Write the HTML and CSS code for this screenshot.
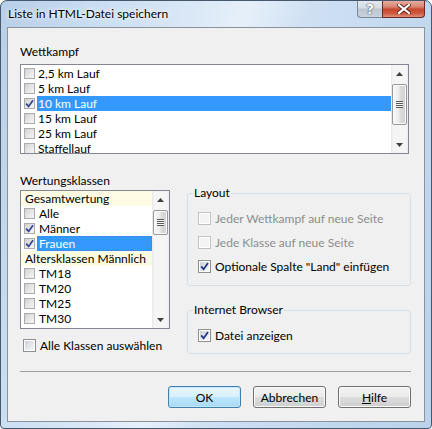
FILE: index.html
```html
<!DOCTYPE html>
<html>
<head>
<meta charset="utf-8">
<title>Liste in HTML-Datei speichern</title>
<link rel="stylesheet" href="styles.css">
</head>
<body>
<div class="window">
  <div class="titlebar">
    <span class="title">Liste in HTML-Datei speichern</span>
    <div class="caption-buttons">
      <span class="cap-btn help">?</span>
      <span class="cap-btn close"><svg width="14" height="10" viewBox="0 0 14 10"><path d="M2 1 L12 9 M12 1 L2 9" stroke="#5a2318" stroke-width="4" stroke-linecap="square"/><path d="M2 1 L12 9 M12 1 L2 9" stroke="#ffffff" stroke-width="2.2" stroke-linecap="square"/></svg></span>
    </div>
  </div>
  <div class="client">
    <div class="label">Wettkampf</div>
    <div class="listbox list-wk">
      <div class="items">
        <div class="item"><span class="lcb"></span><span class="txt">2,5 km Lauf</span></div>
        <div class="item"><span class="lcb"></span><span class="txt">5 km Lauf</span></div>
        <div class="item sel"><span class="lcb"><svg viewBox="0 0 9 9" width="9" height="9"><path d="M1.2 4.6 L3.6 7.4 L8 1.2" fill="none" stroke="#33448f" stroke-width="1.7"/></svg></span><span class="txt">10 km Lauf</span></div>
        <div class="item"><span class="lcb"></span><span class="txt">15 km Lauf</span></div>
        <div class="item"><span class="lcb"></span><span class="txt">25 km Lauf</span></div>
        <div class="item"><span class="lcb"></span><span class="txt">Staffellauf</span></div>
      </div>
      <div class="sb">
        <div class="sb-btn"><svg width="7" height="4" viewBox="0 0 7 4"><path d="M0 4 L3.5 0 L7 4 Z" fill="#404040"/></svg></div>
        <div class="thumb thumb-wk"><span class="grip"></span></div>
        <div class="sb-fill"></div>
        <div class="sb-btn"><svg width="7" height="4" viewBox="0 0 7 4"><path d="M0 0 L3.5 4 L7 0 Z" fill="#404040"/></svg></div>
      </div>
    </div>

    <div class="lower">
      <div class="left-col">
        <div class="label">Wertungsklassen</div>
        <div class="listbox list-kl">
          <div class="items">
            <div class="item head"><span class="htxt">Gesamtwertung</span></div>
            <div class="item"><span class="lcb"></span><span class="txt">Alle</span></div>
            <div class="item"><span class="lcb"><svg viewBox="0 0 9 9" width="9" height="9"><path d="M1.2 4.6 L3.6 7.4 L8 1.2" fill="none" stroke="#33448f" stroke-width="1.7"/></svg></span><span class="txt">Männer</span></div>
            <div class="item sel focus"><span class="lcb"><svg viewBox="0 0 9 9" width="9" height="9"><path d="M1.2 4.6 L3.6 7.4 L8 1.2" fill="none" stroke="#33448f" stroke-width="1.7"/></svg></span><span class="txt">Frauen</span></div>
            <div class="item head"><span class="htxt">Altersklassen Männlich</span></div>
            <div class="item"><span class="lcb"></span><span class="txt">TM18</span></div>
            <div class="item"><span class="lcb"></span><span class="txt">TM20</span></div>
            <div class="item"><span class="lcb"></span><span class="txt">TM25</span></div>
            <div class="item"><span class="lcb"></span><span class="txt">TM30</span></div>
          </div>
          <div class="sb">
            <div class="sb-btn"><svg width="7" height="4" viewBox="0 0 7 4"><path d="M0 4 L3.5 0 L7 4 Z" fill="#404040"/></svg></div>
            <div class="thumb thumb-kl"><span class="grip"></span></div>
            <div class="sb-fill"></div>
            <div class="sb-btn"><svg width="7" height="4" viewBox="0 0 7 4"><path d="M0 0 L3.5 4 L7 0 Z" fill="#404040"/></svg></div>
          </div>
        </div>
        <div class="check-row all-row"><span class="cb"><i></i></span><span>Alle Klassen auswählen</span></div>
      </div>

      <div class="right-col">
        <fieldset class="group layout-group">
          <legend>Layout</legend>
          <div class="check-row opt disabled"><span class="cb"><i></i></span><span>Jeder Wettkampf auf neue Seite</span></div>
          <div class="check-row opt disabled"><span class="cb"><i></i></span><span>Jede Klasse auf neue Seite</span></div>
          <div class="check-row opt"><span class="cb"><i><svg viewBox="0 0 9 9" width="9" height="9"><path d="M1.2 4.4 L3.6 7.3 L8 1" fill="none" stroke="#24388c" stroke-width="1.8"/></svg></i></span><span>Optionale Spalte "Land" einfügen</span></div>
        </fieldset>
        <fieldset class="group browser-group">
          <legend>Internet Browser</legend>
          <div class="check-row opt"><span class="cb"><i><svg viewBox="0 0 9 9" width="9" height="9"><path d="M1.2 4.4 L3.6 7.3 L8 1" fill="none" stroke="#24388c" stroke-width="1.8"/></svg></i></span><span>Datei anzeigen</span></div>
        </fieldset>
      </div>
    </div>

    <div class="separator"></div>

    <div class="buttons">
      <button class="btn default">OK</button>
      <button class="btn">Abbrechen</button>
      <button class="btn"><u>H</u>ilfe</button>
    </div>
  </div>
</div>
</body>
</html>
```

FILE: styles.css
```css
html, body {
  margin: 0;
  padding: 0;
  background: #ffffff;
}

body {
  font-family: "Lato", "Noto Sans", sans-serif;
  font-size: 12px;
  color: #000;
}

.window {
  width: 432px;
  height: 429px;
  box-sizing: border-box;
  border: 1px solid #46586b;
  border-radius: 7px 7px 4px 4px;
  background:
    linear-gradient(104deg, #b7cfe8 0%, #c9ddf2 18%, #dce9f7 38%, #e6f0fa 46%, #cfe0f3 58%, #c2d8ee 80%, #bad2ec 100%);
  display: flex;
  flex-direction: column;
  overflow: hidden;
}

/* ---------- title bar ---------- */
.titlebar {
  height: 26px;
  display: flex;
  padding-left: 7px;
}

.title {
  flex: 1;
  line-height: 26px;
  white-space: nowrap;
  text-shadow: 0 0 6px #ffffff, 0 0 3px #ffffff;
}

.caption-buttons {
  display: flex;
  align-self: flex-start;
  margin-top: -1px;
  margin-right: 6px;
}

.cap-btn {
  height: 18px;
  box-sizing: border-box;
  display: flex;
  align-items: center;
  justify-content: center;
}

.help {
  width: 25px;
  border: 1px solid #7a8795;
  border-top: none;
  border-right: none;
  border-radius: 0 0 0 4px;
  background: linear-gradient(#e4e9ef 0%, #d6dde5 45%, #bcc6d1 55%, #c9d2dc 100%);
  color: #ffffff;
  font-family: "DejaVu Sans", sans-serif;
  font-weight: bold;
  font-size: 14px;
  text-shadow: 0 0 1px #4b5562, 0 0 1px #4b5562, 0 0 1px #4b5562;
}

.close {
  width: 43px;
  border: 1px solid #6b2a22;
  border-top: none;
  border-radius: 0 0 4px 0;
  background: linear-gradient(#e8b3a6 0%, #d98672 40%, #c7472f 55%, #cf5c42 80%, #e0907a 100%);
}

/* ---------- client ---------- */
.client {
  flex: 1;
  margin: 0 6px 6px;
  border: 1px solid #8a939c;
  background: #f0f0f0;
  padding: 16px 13px 13px 12px;
  display: flex;
  flex-direction: column;
}

.label {
  line-height: 16px;
  height: 16px;
  white-space: nowrap;
}

/* ---------- list boxes ---------- */
.listbox {
  border: 1px solid #828790;
  background: #ffffff;
  display: flex;
  box-sizing: border-box;
  overflow: hidden;
}

.list-wk {
  height: 90px;
  margin: 4px 2px 0 0;
}

.list-wk .items {
  padding-top: 1px;
}

.list-kl {
  height: 139px;
  margin-top: 1px;
}

.items {
  flex: 1;
  min-width: 0;
  overflow: hidden;
}

.item {
  height: 15px;
  display: flex;
  align-items: center;
  white-space: nowrap;
}

.lcb {
  flex: none;
  width: 11px;
  height: 11px;
  box-sizing: border-box;
  margin-left: 3px;
  margin-right: 2px;
  border: 1px solid #acacac;
  background: linear-gradient(135deg, #cfcfcf 0%, #e6e6e6 50%, #f6f6f6 100%);
  display: flex;
  align-items: center;
  justify-content: center;
  overflow: visible;
}

.lcb svg {
  display: block;
  overflow: visible;
}

.txt {
  flex: 1;
  height: 15px;
  line-height: 15px;
  padding-left: 1px;
  box-sizing: border-box;
}

.sel .txt {
  background: #3399ff;
  color: #ffffff;
}

.focus .txt {
  outline: 1px dotted #cc6600;
  outline-offset: -1px;
  padding-left: 2px;
}

.list-kl .txt {
  padding-left: 2px;
}

.head {
  background: #fdfbe3;
}

.htxt {
  padding-left: 4px;
  line-height: 15px;
}

/* ---------- scrollbar ---------- */
.sb {
  flex: none;
  width: 17px;
  display: flex;
  flex-direction: column;
  background: linear-gradient(to right, #e9e9e9 0%, #f5f5f5 15%, #f5f5f5 85%, #ececec 100%);
}

.sb-btn {
  height: 17px;
  flex: none;
  display: flex;
  align-items: center;
  justify-content: center;
}

.sb-fill {
  flex: 1;
}

.thumb {
  flex: none;
  margin: 2px 1px 0 1px;
  box-sizing: border-box;
  border: 1px solid #979797;
  border-radius: 2px;
  background: linear-gradient(to right, #f7f7f7 0%, #ececec 45%, #dcdcdc 55%, #d0d0d0 100%);
  box-shadow: inset 0 0 0 1px #fbfbfb;
  display: flex;
  align-items: center;
  justify-content: center;
}

.thumb-wk {
  height: 41px;
}

.thumb-kl {
  height: 25px;
}

.grip {
  width: 7px;
  height: 7px;
  background: repeating-linear-gradient(#5a5a5a 0px, #5a5a5a 1px, #f4f4f4 1px, #f4f4f4 2px);
}

/* ---------- lower area ---------- */
.lower {
  display: flex;
  align-items: flex-start;
  margin-top: 19px;
}

.left-col {
  width: 150px;
  flex: none;
  display: flex;
  flex-direction: column;
}

.right-col {
  flex: 1;
  margin-left: 17px;
  margin-top: 12px;
  display: flex;
  flex-direction: column;
}

.check-row {
  display: flex;
  align-items: center;
  white-space: nowrap;
}

.all-row {
  height: 13px;
  margin-top: 10px;
  margin-left: 3px;
}

.check-row .cb {
  margin-right: 4px;
}

.cb {
  flex: none;
  width: 13px;
  height: 13px;
  box-sizing: border-box;
  border: 1px solid #8e8f8f;
  background: #ffffff;
  padding: 1px;
}

.cb i {
  display: block;
  width: 9px;
  height: 9px;
  background: linear-gradient(135deg, #cdd0d4 0%, #e2e4e6 45%, #f8f8f8 100%);
}

.cb svg {
  display: block;
  overflow: visible;
}

.disabled {
  color: #8d8d8d;
}

.disabled .cb {
  border-color: #c2c2c2;
}

.disabled .cb i {
  background: #f4f4f4;
}

.group {
  margin: 0;
  padding: 5px 10px 7px 10px;
  border: 1px solid #d5dfe5;
  border-radius: 3px;
  min-width: 0;
}

.group legend {
  padding: 0 1px;
  margin-left: -5px;
  line-height: 16px;
}

.opt {
  height: 24px;
}

.browser-group {
  margin-top: 16px;
  padding-bottom: 6px;
}

/* ---------- separator & buttons ---------- */
.separator {
  height: 1px;
  background: #a0a0a0;
  margin-top: 17px;
}

.buttons {
  display: flex;
  justify-content: flex-end;
  gap: 12px;
  margin-top: 14px;
}

.btn {
  width: 73px;
  height: 22px;
  box-sizing: border-box;
  border: 1px solid #707070;
  border-radius: 3px;
  background: linear-gradient(#f2f2f2 0%, #ebebeb 50%, #dddddd 50%, #cfcfcf 100%);
  box-shadow: inset 0 0 0 1px #fbfbfb;
  font-family: inherit;
  font-size: inherit;
  color: #000;
  padding: 0;
  margin: 0;
}

.btn.default {
  border-color: #3c7fb1;
  background: linear-gradient(#eaf6fd 0%, #d9f0fc 50%, #bee6fd 50%, #a7d9f5 100%);
  box-shadow: inset 0 0 0 1px #c6e7f8;
}
```
